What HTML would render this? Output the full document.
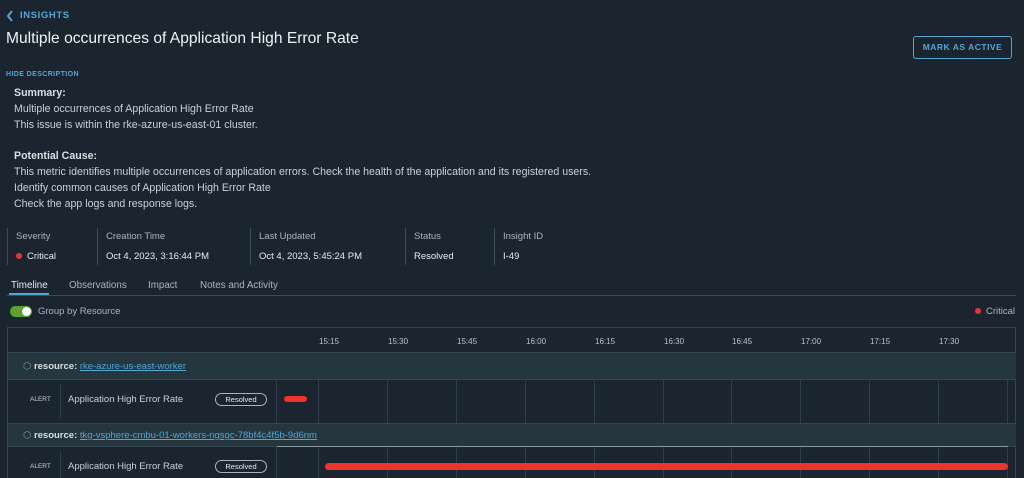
<!DOCTYPE html><html><head><style>
*{margin:0;padding:0;box-sizing:border-box}
body{width:1024px;height:478px;overflow:hidden;background:#1b2530;font-family:"Liberation Sans",sans-serif;color:#c9d1d7;position:relative;font-size:10px}
.a{position:absolute;white-space:nowrap}
.lbl{color:#a9b4bc;font-size:9.5px}
.val{color:#e6ebee;font-size:9.5px}
.d{font-size:10.6px}
.sep{position:absolute;width:1px;background:#3a4a56}
.vl{position:absolute;width:1px;background:#2f3e4a}
.tick{position:absolute;font-size:8px;color:#b8c2c9}
.res{position:absolute;left:8px;width:1008px;background:#26363f;border-top:1px solid #334550;border-bottom:1px solid #334550}
.res a{color:#4fa7d6;text-decoration:underline}
.pill{position:absolute;left:215px;width:52px;height:13px;border:1px solid #aab4ba;border-radius:7px;font-size:7.5px;color:#e6ebee;text-align:center;line-height:11px}
.bar{position:absolute;height:7px;background:#f0322a;border-radius:4px}
</style></head><body>
<svg class="a" style="left:6px;top:10px" width="8" height="12"><path d="M6 1L2 6l4 5" stroke="#4fa7d6" stroke-width="2" fill="none"/></svg>
<div class="a" style="left:20px;top:10px;font-size:9.5px;color:#4fa7d6;font-weight:bold;letter-spacing:.6px">INSIGHTS</div>
<div class="a" style="left:6px;top:30px;font-size:15.6px;color:#eef2f4">Multiple occurrences of Application High Error Rate</div>
<div class="a" style="left:913px;top:36px;width:99px;height:23px;border:1px solid #4fa7d6;border-radius:3px;color:#4fa7d6;font-size:8.5px;font-weight:bold;letter-spacing:.5px;text-align:center;line-height:21px">MARK AS ACTIVE</div>
<div class="a" style="left:6px;top:71px;font-size:7px;color:#4fa7d6;font-weight:bold;letter-spacing:.4px">HIDE DESCRIPTION</div>
<div class="a d" style="left:14px;top:87px;font-weight:bold;color:#d8dfe3">Summary:</div>
<div class="a d" style="left:14px;top:103px">Multiple occurrences of Application High Error Rate</div>
<div class="a d" style="left:14px;top:119px">This issue is within the rke-azure-us-east-01 cluster.</div>
<div class="a d" style="left:14px;top:150px;font-weight:bold;color:#d8dfe3">Potential Cause:</div>
<div class="a d" style="left:14px;top:166px">This metric identifies multiple occurrences of application errors. Check the health of the application and its registered users.</div>
<div class="a d" style="left:14px;top:182px">Identify common causes of Application High Error Rate</div>
<div class="a d" style="left:14px;top:198px">Check the app logs and response logs.</div>
<div class="sep" style="left:7px;top:228px;height:37px"></div>
<div class="sep" style="left:97px;top:228px;height:37px"></div>
<div class="sep" style="left:250px;top:228px;height:37px"></div>
<div class="sep" style="left:405px;top:228px;height:37px"></div>
<div class="sep" style="left:494px;top:228px;height:37px"></div>
<div class="a lbl" style="left:16px;top:231px">Severity</div>
<div class="a lbl" style="left:106px;top:231px">Creation Time</div>
<div class="a lbl" style="left:259px;top:231px">Last Updated</div>
<div class="a lbl" style="left:414px;top:231px">Status</div>
<div class="a lbl" style="left:503px;top:231px">Insight ID</div>
<div class="a" style="left:16px;top:253px;width:6px;height:6px;border-radius:50%;background:#f0322a"></div>
<div class="a val" style="left:27px;top:251px">Critical</div>
<div class="a val" style="left:106px;top:251px">Oct 4, 2023, 3:16:44 PM</div>
<div class="a val" style="left:259px;top:251px">Oct 4, 2023, 5:45:24 PM</div>
<div class="a val" style="left:414px;top:251px">Resolved</div>
<div class="a val" style="left:503px;top:251px">I-49</div>
<div class="a" style="left:11px;top:280px;font-size:9.8px;color:#e6ebee">Timeline</div>
<div class="a lbl" style="left:69px;top:280px;font-size:9.8px">Observations</div>
<div class="a lbl" style="left:148px;top:280px;font-size:9.8px">Impact</div>
<div class="a lbl" style="left:200px;top:280px;font-size:9.8px">Notes and Activity</div>
<div class="a" style="left:7px;top:295px;width:1009px;height:1px;background:#3a4a56"></div>
<div class="a" style="left:9px;top:293px;width:40px;height:2px;background:#4fa7d6"></div>
<div class="a" style="left:10px;top:306px;width:22px;height:11px;border-radius:6px;background:#5aa22c"></div>
<div class="a" style="left:22px;top:307px;width:9px;height:9px;border-radius:50%;background:#fff"></div>
<div class="a lbl" style="left:38px;top:306px">Group by Resource</div>
<div class="a" style="left:975px;top:308px;width:6px;height:6px;border-radius:50%;background:#f0322a"></div>
<div class="a lbl" style="left:986px;top:306px">Critical</div>
<div class="a" style="left:7px;top:327px;width:1009px;height:151px;border:1px solid #334550;border-bottom:none"></div>
<div class="tick" style="left:319px;top:337px">15:15</div><div class="tick" style="left:388px;top:337px">15:30</div><div class="tick" style="left:457px;top:337px">15:45</div><div class="tick" style="left:526px;top:337px">16:00</div><div class="tick" style="left:595px;top:337px">16:15</div><div class="tick" style="left:664px;top:337px">16:30</div><div class="tick" style="left:732px;top:337px">16:45</div><div class="tick" style="left:801px;top:337px">17:00</div><div class="tick" style="left:870px;top:337px">17:15</div><div class="tick" style="left:939px;top:337px">17:30</div>
<div class="vl" style="left:276px;top:379px;height:99px"></div>
<div class="vl" style="left:318px;top:379px;height:99px"></div><div class="vl" style="left:387px;top:379px;height:99px"></div><div class="vl" style="left:456px;top:379px;height:99px"></div><div class="vl" style="left:525px;top:379px;height:99px"></div><div class="vl" style="left:594px;top:379px;height:99px"></div><div class="vl" style="left:663px;top:379px;height:99px"></div><div class="vl" style="left:731px;top:379px;height:99px"></div><div class="vl" style="left:800px;top:379px;height:99px"></div><div class="vl" style="left:869px;top:379px;height:99px"></div><div class="vl" style="left:938px;top:379px;height:99px"></div><div class="vl" style="left:1007px;top:379px;height:99px"></div>
<div class="vl" style="left:60px;top:384px;height:34px"></div><div class="vl" style="left:60px;top:451px;height:27px"></div>
<div class="res" style="top:352px;height:28px"><div class="a" style="left:15px;top:8px;font-size:9.5px"><span style="color:#8a969e">⬡</span> <b style="color:#d8dfe3">resource:</b> <a>rke-azure-us-east-worker</a></div></div>
<div class="res" style="top:423px;height:24px"><div class="a" style="left:15px;top:6px;font-size:9.5px"><span style="color:#8a969e">⬡</span> <b style="color:#d8dfe3">resource:</b> <a>tkg-vsphere-cmbu-01-workers-ngsgc-78bf4c4f5b-9d6nm</a></div></div>
<div class="a" style="left:277px;top:446px;width:731px;height:1px;background:#8d989e"></div>
<div class="a" style="left:30px;top:396px;font-size:6.5px;color:#c9d1d7">ALERT</div>
<div class="a" style="left:68px;top:394px;font-size:9.5px">Application High Error Rate</div>
<div class="pill" style="top:393px">Resolved</div>
<div class="bar" style="left:284px;top:396px;width:23px;height:6px"></div>
<div class="a" style="left:30px;top:463px;font-size:6.5px;color:#c9d1d7">ALERT</div>
<div class="a" style="left:68px;top:461px;font-size:9.5px">Application High Error Rate</div>
<div class="pill" style="top:460px">Resolved</div>
<div class="bar" style="left:325px;top:463px;width:683px"></div>
</body></html>
